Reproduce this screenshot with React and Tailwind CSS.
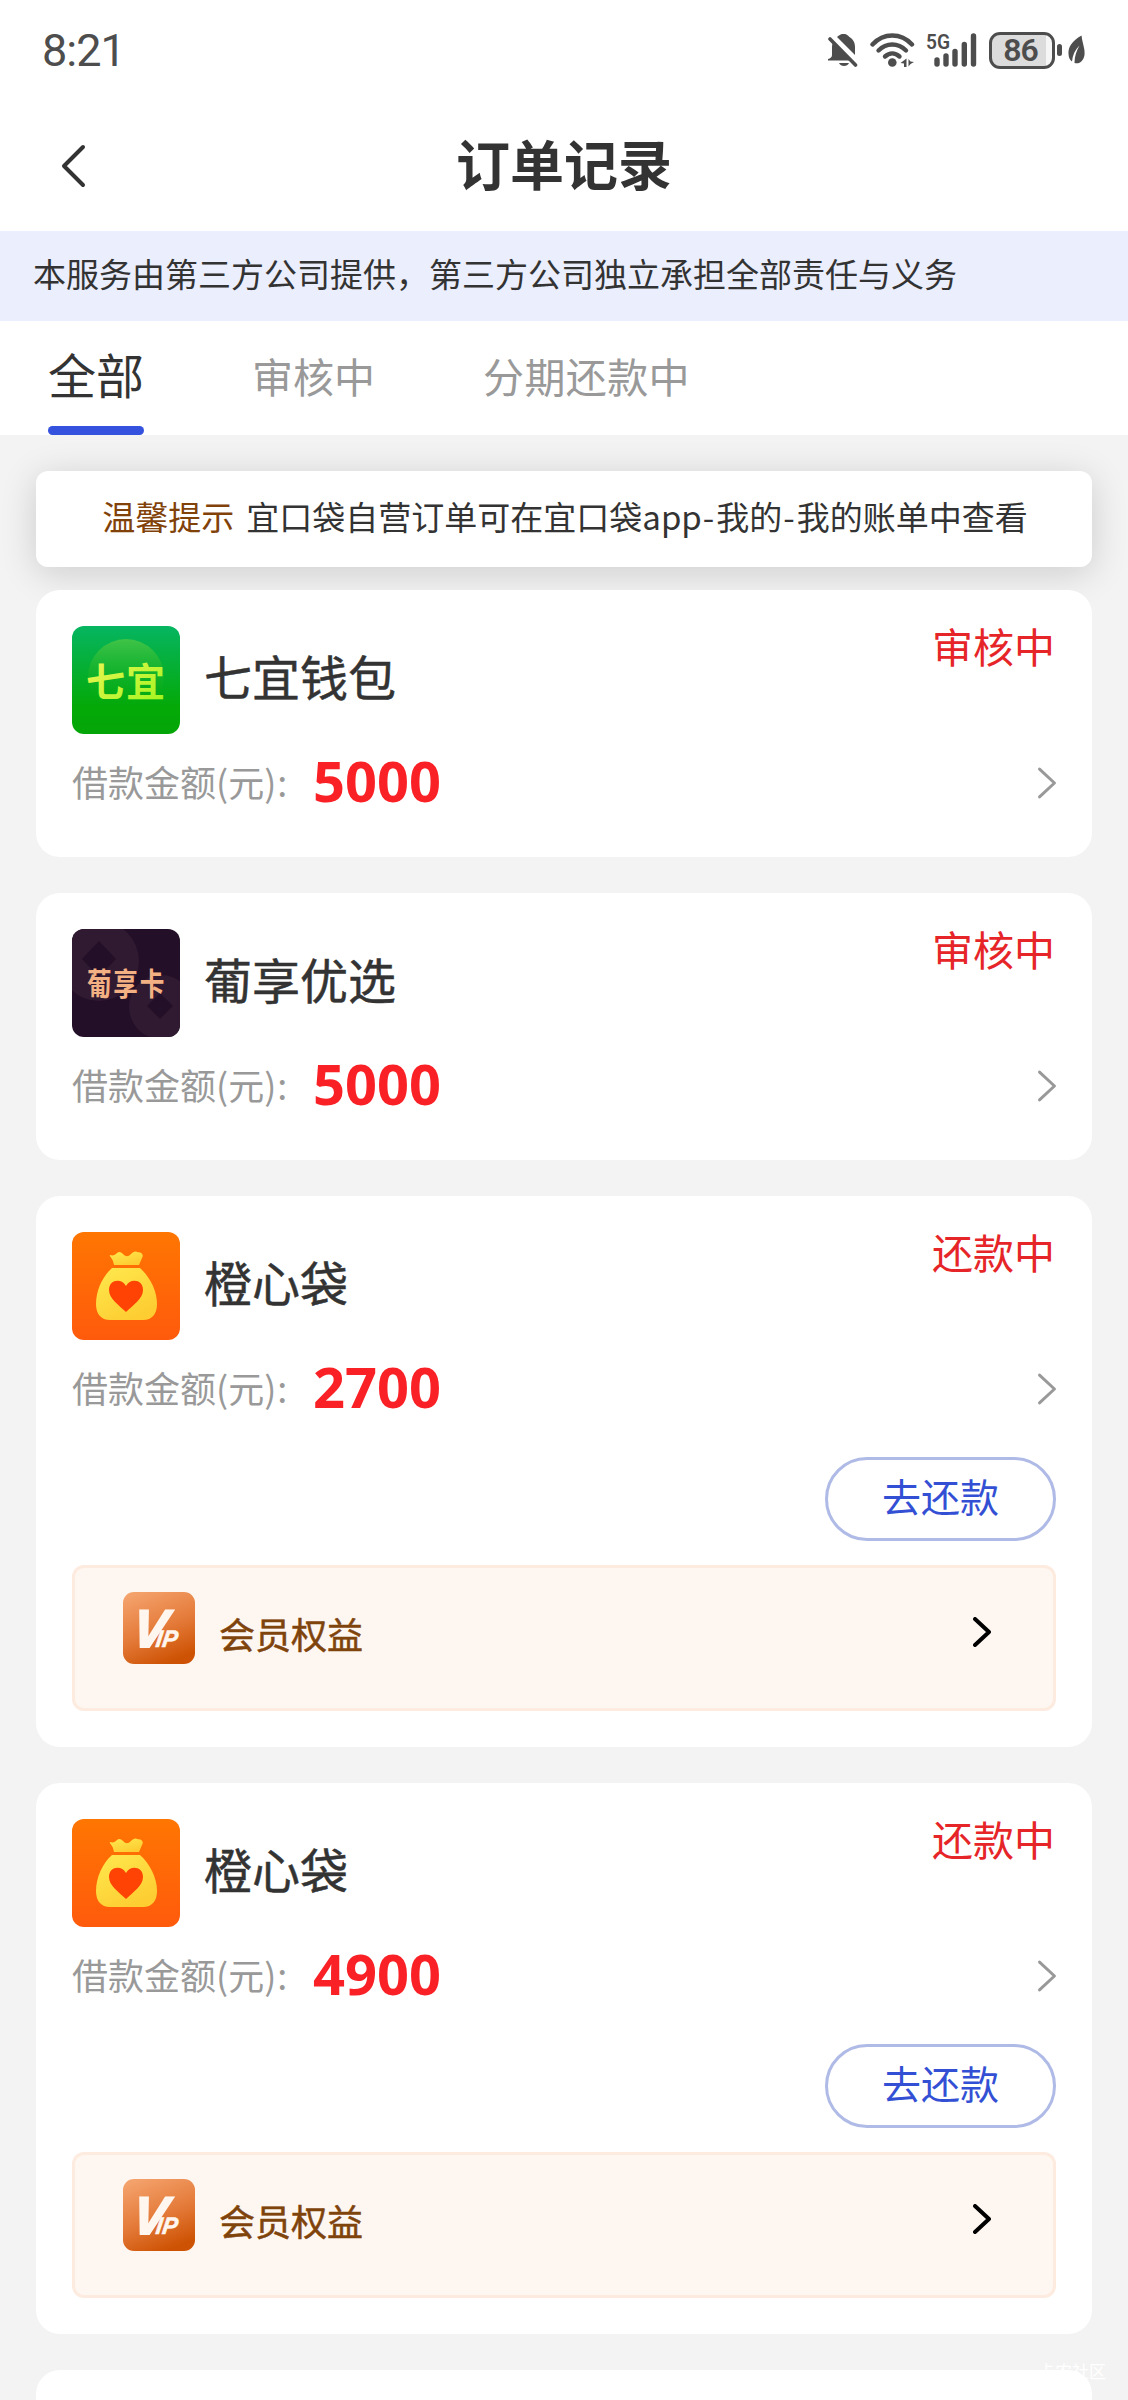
import React from "react";

function StatusBar() {
  return (
    <div className="flex h-[99px] items-center justify-between pt-px pl-[42px] pr-[42px] text-[#4d4d4d]">
      <div className="font-['Roboto',sans-serif] text-[45px] leading-none tracking-[-1px]">8:21</div>
      <div className="flex items-center">
        <svg className="mr-[12px] h-[34px] w-[30px]" viewBox="0 0 30 34" fill="currentColor">
          <path d="M0 27.5h24L5.5 8.5C4 11 4 13 4 16v6c0 2-1.500 3.500-4 4z" />
          <path d="M9 4C11 3 11.500 1 15.500 1s4.500 2 6 3c4 2.500 5.500 6 5.500 10v8z" />
          <path d="M11 30h10c-1.500 4-8.500 4-10 0z" />
          <path d="M2 6l25.500 26" stroke="currentColor" strokeWidth="3.600" strokeLinecap="round" />
        </svg>
        <svg className="mr-[12px] h-[34px] w-[45px]" viewBox="0 0 45 34" fill="none" stroke="currentColor" strokeWidth="4.400" strokeLinecap="round">
          <path d="M2.500 11.500C13.500-.5 31-.5 42 11.500" />
          <path d="M8.500 17.500c8-8 19.500-8 27.500 0" />
          <path d="M15 23.500c4.500-4 10-4 14.500 0" />
          <circle cx="22.300" cy="29.500" r="4.300" fill="currentColor" stroke="none" />
          <path d="M30.500 30l6-4.500V34h-2.500v-3.500zM38.500 26v7.500l2-2.500 3.500-2-3.500-.5z" fill="currentColor" stroke="none" />
        </svg>
        <svg className="mr-[12px] h-[36px] w-[50px] overflow-visible" viewBox="0 0 50 36">
          <text x="-1" y="17" fontFamily="Roboto, sans-serif" fontSize="21" fontWeight="600" textLength="24" lengthAdjust="spacingAndGlyphs" fill="currentColor">5G</text>
          <g stroke="currentColor" strokeWidth="5.400" strokeLinecap="round">
            <path d="M10 28v4M19 24v8M28 19.500v12.500M37.300 12.500v19.500M46.500 4v28" />
          </g>
        </svg>
        <div className="flex h-[37px] w-[66px] items-center justify-center rounded-[11px] border-3 border-current bg-[linear-gradient(to_right,#dcdcdc_54px,#f6f6f6_54px)] pr-[3px] font-['Roboto',sans-serif] text-[32px] leading-none font-semibold tracking-[-1px]">86</div>
        <div className="ml-[2px] h-[12px] w-[5px] rounded-full bg-current" />
        <svg className="ml-[6px] h-[30px] w-[18px]" viewBox="0 0 18 30" fill="currentColor">
          <path d="M13.500.5C4 6 0 12 .5 19c.2 4 1.500 6 3.500 7.500C4.500 20 7 15 11.500 10.500 8.500 16 6.500 21 6.500 28c5 1.500 9-2 10-8 .8-6-2-11-3-19.500z" />
        </svg>
      </div>
    </div>
  );
}

function Chevron({ className, width }) {
  return (
    <svg className={className} viewBox="0 0 18 30" fill="none" stroke="currentColor" strokeWidth={width} strokeLinecap="round" strokeLinejoin="round">
      <path d="M2 2l14 13L2 28" />
    </svg>
  );
}

function QiyiLogo() {
  return (
    <svg className="h-[108px] w-[108px] rounded-[12px]" viewBox="0 0 108 108">
      <defs>
        <linearGradient id="qiyiBg" x1="0" y1="0" x2="0" y2="1">
          <stop offset="0" stopColor="#06b561" />
          <stop offset="0.75" stopColor="#04a907" />
          <stop offset="1" stopColor="#04a508" />
        </linearGradient>
        <linearGradient id="qiyiDisc" x1="0" y1="0" x2="0" y2="1">
          <stop offset="0" stopColor="#7bd43c" stopOpacity="0.5" />
          <stop offset="0.8" stopColor="#1ab010" stopOpacity="0" />
        </linearGradient>
        <linearGradient id="qiyiText" x1="0" y1="0" x2="1" y2="1">
          <stop offset="0" stopColor="#f6f65a" />
          <stop offset="1" stopColor="#9cf51c" />
        </linearGradient>
      </defs>
      <rect width="108" height="108" fill="url(#qiyiBg)" />
      <circle cx="54" cy="51" r="38" fill="url(#qiyiDisc)" />
      <text x="14" y="70" fontFamily="'Noto Sans CJK SC', sans-serif" fontSize="39" fontWeight="700" textLength="79" fill="url(#qiyiText)">七宜</text>
    </svg>
  );
}

function PuxiangLogo() {
  return (
    <svg className="h-[108px] w-[108px] rounded-[12px]" viewBox="0 0 108 108">
      <rect width="108" height="108" fill="#230f27" />
      <g fill="#301a31">
        <circle cx="27" cy="32" r="40" />
        <circle cx="89" cy="78" r="32" />
      </g>
      <path d="M27 12l17 18-17 18-17-18zM88 64l13 13-13 13-13-13z" fill="#230f27" />
      <g transform="scale(0.88 1.1)">
        <text x="17" y="60" fontFamily="'Noto Sans CJK SC', sans-serif" fontSize="28" fontWeight="700" textLength="88" fill="#f3b183">葡享卡</text>
      </g>
    </svg>
  );
}

function PouchLogo() {
  return (
    <svg className="h-[108px] w-[108px] rounded-[12px]" viewBox="0 0 108 108">
      <defs>
        <linearGradient id="pouchBg" x1="0" y1="0" x2="0" y2="1">
          <stop offset="0" stopColor="#ff7602" />
          <stop offset="1" stopColor="#ff5a0c" />
        </linearGradient>
        <linearGradient id="pouchBody" x1="0" y1="0" x2="0.600" y2="1">
          <stop offset="0" stopColor="#ffe94e" />
          <stop offset="1" stopColor="#fdcd32" />
        </linearGradient>
      </defs>
      <rect width="108" height="108" fill="url(#pouchBg)" />
      <path d="M38 23c3 1 5 0 7-2 2-2 4-1 6 1 3 3 5 3 8 0 2-2 4-3 6-2 5 0 7 3 5 6l-3 7H42l-1-4c-1-3-4-5-3-6z" fill="url(#pouchBody)" />
      <path d="M40 36h28c10 9 17 23 17 36 0 10-5 16-14 16H38c-9 0-14-6-14-16 0-13 6-27 16-36z" fill="url(#pouchBody)" />
      <path d="M54 80C47 73 37 67 37 58c0-11 13-12 17-4 4-8 17-7 17 4 0 9-10 15-17 22z" fill="#ff4304" />
    </svg>
  );
}

function VipLogo() {
  return (
    <svg className="h-[72px] w-[72px] rounded-[11px]" viewBox="0 0 72 72">
      <defs>
        <linearGradient id="vipBg" x1="0.200" y1="0" x2="0.600" y2="1">
          <stop offset="0" stopColor="#f4a26c" />
          <stop offset="0.550" stopColor="#e47a39" />
          <stop offset="1" stopColor="#cd5203" />
        </linearGradient>
      </defs>
      <rect width="72" height="72" fill="url(#vipBg)" />
      <g transform="translate(10 0) skewX(-8)">
        <text x="6" y="55" fill="#fff7ef" stroke="#fff7ef" strokeWidth="2.200" fontFamily="'Liberation Sans', sans-serif" fontWeight="700" fontStyle="italic" fontSize="53" transform="scale(0.95 1)">
          V<tspan dx="-10" fontSize="24" strokeWidth="0.600">IP</tspan>
        </text>
      </g>
    </svg>
  );
}

const logos = { qiyi: QiyiLogo, puxiang: PuxiangLogo, pouch: PouchLogo };

function OrderCard({ logo, name, status, amount, repay }) {
  const Logo = logos[logo];
  return (
    <section className="rounded-[24px] bg-white p-[36px]">
      <div className="flex items-start">
        <Logo />
        <h2 className="mt-[25px] ml-[24px] text-[48px] leading-[48px] font-normal text-[#333] [-webkit-text-stroke:0.5px_#333]">{name}</h2>
        <span className="-mt-[2px] mr-px ml-auto text-[41px] leading-[42px] text-[#e62528]">{status}</span>
      </div>
      <div className="mt-[17px] flex h-[60px] items-center">
        <span className="w-[241px] text-[36px] leading-[60px] text-[#999]">
          借款金额(元<span className="tracking-[1px]">)</span>:
        </span>
        <span className="-mt-[2px] font-['Noto_Sans',sans-serif] text-[56px] leading-[60px] font-bold text-[#fa2126]">{amount}</span>
        <Chevron className="mt-[3px] -mr-px ml-auto h-[32px] w-[20px] text-[#999]" width="2.800" />
      </div>
      {repay ? (
        <>
          <button className="mt-[40px] ml-auto flex h-[84px] w-[231px] items-center justify-center rounded-full border-3 border-[#afbbe6] pb-[7px] text-[39px] leading-none text-[#3350d4]">去还款</button>
          <div className="mt-[24px] flex h-[146px] items-start rounded-[12px] border-3 border-[#fdebdf] bg-[#fef7f1] pt-[24px] pr-[62px] pl-[48px]">
            <VipLogo />
            <span className="mt-[23px] ml-[24px] text-[36px] leading-[36px] text-[#7f430c] [-webkit-text-stroke:0.5px_#7f430c]">会员权益</span>
            <Chevron className="mt-[25px] ml-auto h-[30px] w-[18px] text-black" width="4" />
          </div>
        </>
      ) : (
        <div className="h-[10px]" />
      )}
    </section>
  );
}

const orders = [
  { logo: "qiyi", name: "七宜钱包", status: "审核中", amount: "5000" },
  { logo: "puxiang", name: "葡享优选", status: "审核中", amount: "5000" },
  { logo: "pouch", name: "橙心袋", status: "还款中", amount: "2700", repay: true },
  { logo: "pouch", name: "橙心袋", status: "还款中", amount: "4900", repay: true },
];

export default function App() {
  return (
    <div className="relative h-[2400px] w-[1128px] overflow-hidden bg-[#f3f3f3] font-['Noto_Sans_CJK_SC',sans-serif] text-[#333]">
      <header className="bg-white">
        <StatusBar />
        <div className="grid h-[132px] grid-cols-[1fr_auto_1fr] items-center">
          <svg className="mt-px ml-[60px] h-[44px] w-[28px]" viewBox="0 0 28 44" fill="none" stroke="#333" strokeWidth="4" strokeLinecap="round" strokeLinejoin="round">
            <path d="M23 3L4 22l19 19" />
          </svg>
          <h1 className="pb-[4px] text-[54px] leading-[54px] font-bold">订单记录</h1>
        </div>
      </header>
      <div className="h-[90px] bg-[#ebeefc] pl-[33px] text-[33px] leading-[85px]">本服务由第三方公司提供，第三方公司独立承担全部责任与义务</div>
      <nav className="flex h-[114px] items-start gap-[108px] bg-white pl-[48px] text-[41px] leading-[109px] text-[#999]">
        <div className="flex h-[114px] flex-col justify-between text-[48px] text-[#333]">
          <span className="h-[100px] leading-[105px]">全部</span>
          <span className="h-[9px] rounded-full bg-[#3552df]" />
        </div>
        <span>审核中</span>
        <span className="tracking-[0.4px]">分期还款中</span>
      </nav>
      <main className="flex flex-col px-[36px] pt-[36px]">
        <div className="flex h-[96px] justify-center rounded-[12px] bg-white text-[33px] leading-[91px] whitespace-nowrap shadow-[0_6px_36px_rgba(0,0,0,0.16)]">
          <span className="mr-[12px] ml-[2px] text-[#814209]">温馨提示</span>
          <span>
            宜口袋自营订单可在宜口袋app<span className="ml-[1px] tracking-[2px]">-</span>我的<span className="ml-[1px] tracking-[2px]">-</span>我的账单中查看
          </span>
        </div>
        <div className="relative mt-[23px] flex flex-col gap-[36px]">
          {orders.map((order, i) => (
            <OrderCard key={i} {...order} />
          ))}
          <section className="h-[120px] rounded-[24px] bg-white" />
        </div>
      </main>
      <div className="absolute right-[22px] bottom-[21px] text-[17px] leading-none text-white">卡农社区</div>
    </div>
  );
}
